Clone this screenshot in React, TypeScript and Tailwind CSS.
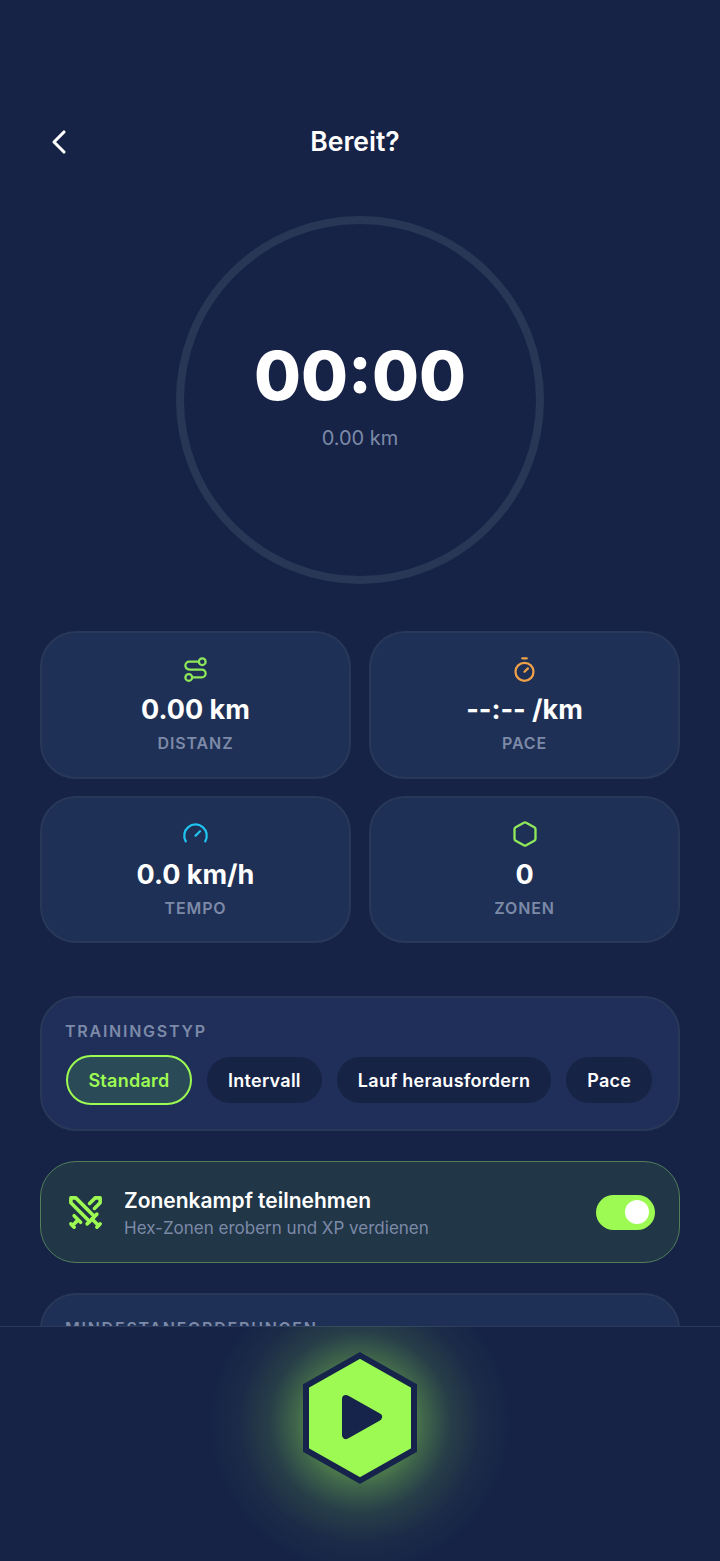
import { ChevronLeft, Gauge, Hexagon, Route, Swords, Timer } from "lucide-react";
import type { ReactNode } from "react";

type StatCardProps = {
  icon: ReactNode;
  value: string;
  label: string;
};

function StatCard({ icon, value, label }: StatCardProps) {
  return (
    <div className="flex h-[147.5px] flex-col items-center rounded-[36px] border-2 border-[#283859] bg-[#1f3056] pt-[22px]">
      <div className="flex h-[28px] items-center justify-center">{icon}</div>
      <div className="mt-[9px] text-[27px] leading-[36px] font-bold text-white">{value}</div>
      <div className="mt-[5px] text-[16px] leading-[20px] font-semibold tracking-[0.055em] text-[#7c8aa8]">{label}</div>
    </div>
  );
}

const types = ["Intervall", "Lauf herausfordern", "Pace"];

export default function App() {
  return (
    <div className="flex h-[1561px] w-[720px] flex-col overflow-hidden bg-[#162347] font-['Inter',sans-serif] [font-optical-sizing:none]">
      <div className="min-h-0 flex-1 overflow-hidden px-[40px] pt-[118px]">
        {/* Header */}
        <header className="flex h-[48px] items-center">
          <div className="w-[40px]">
            <ChevronLeft className="-ml-[1px] h-[40px] w-[40px] text-white" strokeWidth={1.9} />
          </div>
          <h1 className="flex-1 text-center text-[26.5px] font-semibold text-white">Bereit?</h1>
          <div className="w-[50px]" />
        </header>

        {/* Timer ring */}
        <div className="mt-[50px] flex justify-center">
          <div className="flex h-[368px] w-[368px] flex-col items-center justify-center rounded-full border-[8px] border-[#293757]">
            <div className="mt-[-14px] text-[68px] leading-[80px] font-extrabold text-white">00:00</div>
            <div className="mt-[9px] text-[20px] leading-[28px] text-[#7c8aa8]">0.00 km</div>
          </div>
        </div>

        {/* Stats */}
        <section className="mt-[47px] grid grid-cols-2 gap-x-[18px] gap-y-[17px]">
          <StatCard icon={<Route className="h-[27px] w-[27px] text-[#8fe85a]" strokeWidth={2} />} value="0.00 km" label="DISTANZ" />
          <StatCard icon={<Timer className="h-[27px] w-[27px] text-[#f0a048]" strokeWidth={2} />} value="--:-- /km" label="PACE" />
          <StatCard icon={<Gauge className="h-[27px] w-[27px] text-[#1fc4ef]" strokeWidth={2} />} value="0.0 km/h" label="TEMPO" />
          <StatCard icon={<Hexagon className="h-[28px] w-[28px] text-[#8fe85a]" strokeWidth={2} />} value="0" label="ZONEN" />
        </section>

        {/* Training type */}
        <section className="mt-[53px] h-[135px] rounded-[36px] border-2 border-[#283859] bg-[#1f2f5a] pt-[22px] pr-[24px] pl-[24px]">
          <div className="-ml-[1px] text-[16px] leading-[22px] font-semibold tracking-[0.11em] text-[#7c8aa8]">TRAININGSTYP</div>
          <div className="mt-[13px] flex items-center gap-[15px]">
            <div className="flex h-[50px] w-[126px] items-center justify-center rounded-full border-2 border-[#9dfa52] bg-[#2b4a58] pt-[1px] text-[18px] font-semibold tracking-[0.015em] text-[#9dfa52]">
              Standard
            </div>
            {types.map((t) => (
              <div key={t} className="flex h-[46px] items-center rounded-full bg-[#172345] px-[21px] pt-[1px] text-[18px] font-semibold tracking-[0.015em] text-white">
                {t}
              </div>
            ))}
          </div>
        </section>

        {/* Zone battle */}
        <section className="mt-[30px] flex h-[102px] items-center rounded-[36px] border-[1.5px] border-[#527f58] bg-[#213647] pr-[24px] pl-[26px]">
          <Swords className="-ml-[1px] h-[39px] w-[39px] text-[#9dfa52]" strokeWidth={2.2} />
          <div className="ml-[19px] flex-1 pt-[4px]">
            <div className="text-[21px] leading-[28px] font-semibold text-white">Zonenkampf teilnehmen</div>
            <div className="text-[17px] leading-[26px] text-[#7c8aa8]">Hex-Zonen erobern und XP verdienen</div>
          </div>
          <div className="flex h-[35px] w-[59px] items-center justify-end rounded-full bg-[#9dfa52] pr-[6px]">
            <div className="h-[24px] w-[24px] rounded-full bg-white" />
          </div>
        </section>

        {/* Requirements, cut off by the bottom bar */}
        <section className="mt-[30px] h-[160px] rounded-[36px] border-2 border-[#283859] bg-[#1f3056] px-[24px] pt-[22px]">
          <div className="-ml-[1px] text-[16px] leading-[22px] font-semibold tracking-[0.11em] text-[#7c8aa8]">MINDESTANFORDERUNGEN</div>
        </section>
      </div>

      {/* Start bar */}
      <div className="flex h-[235px] shrink-0 justify-center border-t border-[#2a3a5c] bg-[#162347] pt-[25px]">
        <div className="relative h-[132px] w-[116px]">
          <div className="absolute top-[-110px] left-[-122px] h-[360px] w-[360px] bg-[radial-gradient(circle_closest-side,rgba(157,250,82,0.4)_30%,rgba(157,250,82,0.3)_36%,rgba(157,250,82,0.13)_50%,rgba(157,250,82,0.04)_67%,rgba(157,250,82,0)_84%)] [clip-path:inset(84px_0_0_0)]" />
          <svg className="absolute inset-0" width="116" height="132" viewBox="0 0 116 132">
            <polygon points="58,3.5 112.5,34 112.5,98 58,130.5 3.5,98 3.5,34" transform="translate(0 1.5)" fill="#7fc04a" opacity="0.7" />
            <polygon points="58,3.5 112,34 112,98 58,128.5 4,98 4,34" fill="#9dfa52" stroke="#16234a" strokeWidth="6" />
            <polygon points="44,47 76,65 44,83" fill="#16234a" stroke="#16234a" strokeWidth="8" strokeLinejoin="round" />
          </svg>
        </div>
      </div>
    </div>
  );
}
